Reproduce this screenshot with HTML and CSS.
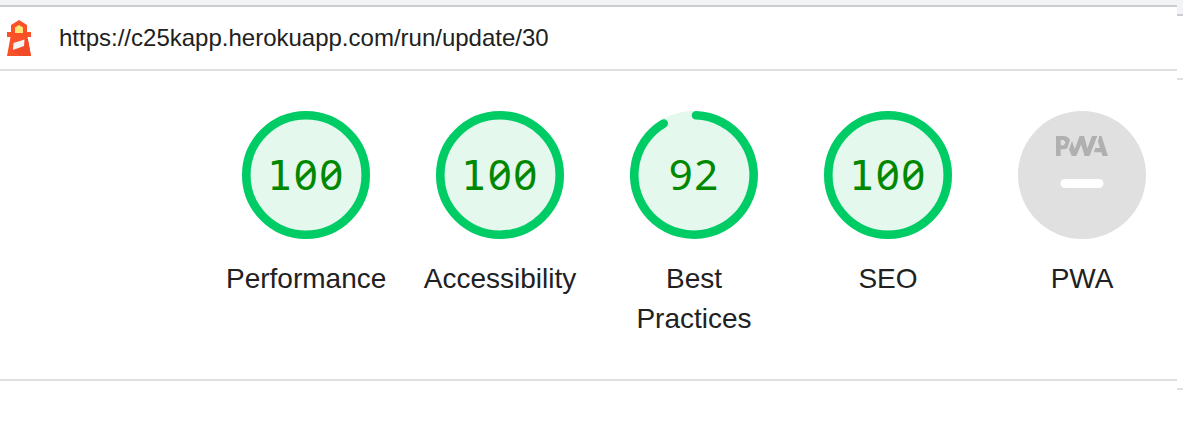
FILE: index.html
```
<!DOCTYPE html>
<html lang="en">
<head>
<meta charset="utf-8">
<title>Lighthouse report</title>
<link rel="stylesheet" href="styles.css">
</head>
<body>
<main class="report">
  <header class="topbar">
    <svg class="logo" viewBox="0 0 24 36" aria-hidden="true">
      <path fill="#fa5128" d="M12 0 20 5V12H24V17H20.5L24 36H0L3.5 17H0V12H4V5Z"/>
      <path fill="#f04b26" d="M18 19 20.8 19 24 36H12L6 30 18 25Z"/>
      <path fill="#ffe678" d="M8 13V7.5L12 5 16 7.5V13Z"/>
      <path fill="#f4f4f4" d="M6.5 23 17.5 19.5 17 26 6 30Z"/>
    </svg>
    <span class="url">https://c25kapp.herokuapp.com/run/update/30</span>
  </header>
  <section class="scores">
    <div class="gauge">
      <svg class="dial" viewBox="0 0 128 128"><circle class="base" cx="64" cy="64" r="64"/><circle class="arc" cx="64" cy="64" r="59.7"/><text class="score" y="79"><tspan class="one" x="25">1</tspan><tspan x="51.7 77.2">00</tspan></text></svg>
      <span class="label">Performance</span>
    </div>
    <div class="gauge">
      <svg class="dial" viewBox="0 0 128 128"><circle class="base" cx="64" cy="64" r="64"/><circle class="arc" cx="64" cy="64" r="59.7"/><text class="score" y="79"><tspan class="one" x="25">1</tspan><tspan x="51.7 77.2">00</tspan></text></svg>
      <span class="label">Accessibility</span>
    </div>
    <div class="gauge">
      <svg class="dial" viewBox="0 0 128 128"><circle class="base" cx="64" cy="64" r="64"/><path class="arc" d="M66 4.3A59.7 59.7 0 1 1 33.7 12.5"/><text class="score" x="38.7 64.3" y="79">92</text></svg>
      <span class="label">Best Practices</span>
    </div>
    <div class="gauge">
      <svg class="dial" viewBox="0 0 128 128"><circle class="base" cx="64" cy="64" r="64"/><circle class="arc" cx="64" cy="64" r="59.7"/><text class="score" y="79"><tspan class="one" x="25">1</tspan><tspan x="51.7 77.2">00</tspan></text></svg>
      <span class="label">SEO</span>
    </div>
    <div class="gauge">
      <svg class="dial" viewBox="0 0 128 128">
        <circle class="empty" cx="64" cy="64" r="64"/>
        <g class="pwa" transform="translate(38 25)">
          <path fill-rule="evenodd" d="M0 0H8Q12.5 .5 14 4L11.5 12Q10 13.2 8 13.2H4.7V20H0ZM4.7 4V9.3H7.5Q11 6.7 7.5 4Z"/>
          <path d="M16 5 18.8 13 23.6 0H28.2L31.3 12.5 36 0H41.3L33.5 20H28.5L25.2 8.5 20.3 20H15.8L13 13.5Z"/>
          <path d="M43.3 0H45.5L52 20H46.5L45.3 16.3H37.8L39.3 12H44L42 5.5Z"/>
        </g>
        <path class="dash" d="M47 72.5H81"/>
      </svg>
      <span class="label">PWA</span>
    </div>
  </section>
</main>
<aside class="edge"><div class="edge-top"></div><div class="edge-head"></div><div class="edge-body"></div></aside>
</body>
</html>
```
FILE: styles.css
```
* { box-sizing: border-box; }
body { margin: 0; height: 423px; display: flex; overflow: hidden; background: #fff; color: #212121; font-family: "Liberation Sans", Arial, sans-serif; }
.report { width: 1177px; border-top: 5px solid #f1f3f4; }
.topbar { height: 66px; display: flex; align-items: center; gap: 28px; padding-left: 7px; border-top: 2px solid #cacdd1; border-bottom: 2px solid #dfdfdf; }
.logo { width: 24px; height: 36px; }
.url { font-size: 24px; line-height: 32px; }
.scores { height: 310px; display: flex; padding: 40px 0 0 209px; border-bottom: 2px solid #dfdfdf; }
.gauge { width: 194px; flex: none; display: flex; flex-direction: column; align-items: center; gap: 20px; }
.dial { width: 128px; height: 128px; }
.base { fill: #e4f8ee; }
.arc { fill: none; stroke: #0c6; stroke-width: 8.6; stroke-linecap: round; }
.score { fill: #080; font: 42px "Noto Sans", sans-serif; font-feature-settings: "zero"; }
.one { font: 41px "DejaVu Sans Mono", monospace; }
.empty { fill: #e0e0e0; }
.pwa { fill: #b0b0b0; }
.dash { stroke: #fff; stroke-width: 9; stroke-linecap: round; }
.label { width: 160px; font-size: 28px; line-height: 40px; text-align: center; }
.edge { width: 6px; }
.edge-top { height: 16px; background: #f1f3f4; border-bottom: 2px solid #cacdd1; }
.edge-head { height: 64px; border-bottom: 2px solid #dfdfdf; }
.edge-body { height: 310px; border-bottom: 2px solid #dfdfdf; }
```
